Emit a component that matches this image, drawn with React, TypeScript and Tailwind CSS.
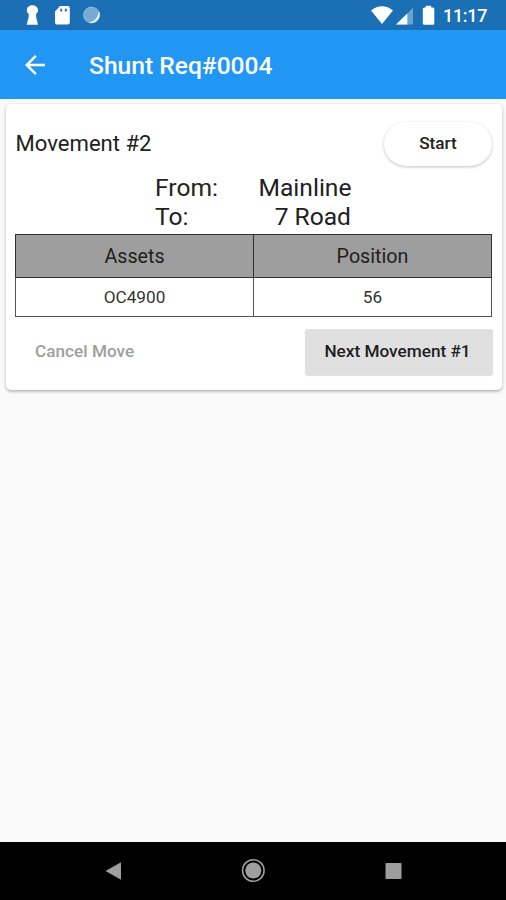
function StatusBar() {
  return (
    <header className="flex h-[30px] items-center justify-between bg-[#1a6fb5] text-white">
      <svg className="h-[30px] w-[120px]" viewBox="0 0 120 30" fill="currentColor">
        <path d="M32.400 5.200c3.400 0 5.600 2.300 5.600 5 0 1.700-.8 2.900-2 3.800l.2 3.500 1.900 7.300H26.700l1.900-7.300.2-3.500c-1.200-.9-2-2.100-2-3.800 0-2.700 2.200-5 5.600-5Z" />
        <path fillRule="evenodd" d="M60 6h7.800a2 2 0 0 1 2 2v14.600a2 2 0 0 1-2 2H57a2 2 0 0 1-2-2V11.500ZM60.300 8.800v2.700h1.900V8.800ZM64.800 8.800v2.700h2V8.800Z" />
        <circle cx="91.500" cy="15" r="8.300" fill="#76a9d3" />
        <circle cx="91.500" cy="15" r="7.900" fill="none" stroke="#9dc3e2" strokeWidth=".8" opacity=".7" />
        <path d="M99 12.200a8 8 0 0 1-9.200 10.300c4.400-.9 7.700-3.700 9.200-10.300Z" fill="#e4f0fa" stroke="#e4f0fa" strokeWidth=".8" strokeLinejoin="round" />
      </svg>
      <div className="flex items-center">
        <svg className="h-[30px] w-[72px]" viewBox="366 0 72 30" fill="currentColor">
          <path d="M371 10.500C377.500 4.800 386.500 4.800 393 10.500L382 24Z" />
          <path d="M413 7.800v16.700H396Z" opacity=".35" />
          <path d="M407.300 13.400v11.100H396Z" />
          <path d="M425.800 5.800h5.400V7.500h1.600a1.500 1.500 0 0 1 1.500 1.500v14.200a1.500 1.500 0 0 1-1.500 1.500h-8.500a1.500 1.500 0 0 1-1.500-1.500V9a1.500 1.500 0 0 1 1.500-1.500h1.500Z" />
        </svg>
        <span className="w-[68px] pl-[5px] pt-[2px] text-[18px] font-medium leading-[28px] tracking-[-0.3px]">11:17</span>
      </div>
    </header>
  );
}

function AppBar() {
  return (
    <div className="flex h-[69px] items-center bg-[#2196f3] pl-[20px] text-white">
      <svg className="h-[30px] w-[30px]" viewBox="0 0 24 24" fill="currentColor">
        <path d="M20 11H7.830l5.590-5.590L12 4l-8 8 8 8 1.410-1.410L7.830 13H20v-2z" />
      </svg>
      <h1 className="ml-[39px] pt-[2px] text-[24.600px] font-medium leading-[30px]">Shunt Req#0004</h1>
    </div>
  );
}

function MovementCard() {
  return (
    <section className="ml-[6px] mt-[5px] h-[286px] w-[496px] rounded-[5px] bg-white px-[9px] pt-[18px] shadow-[0_1px_4px_rgba(0,0,0,0.2),0_2px_2px_rgba(0,0,0,0.12)]">
      <div className="flex h-[44px] items-center justify-between">
        <h2 className="-mt-[2px] ml-[0.500px] text-[22.100px] leading-[28px]">Movement #2</h2>
        <button className="mr-[1px] h-[44px] w-[108px] rounded-full bg-white text-[17.200px] font-medium shadow-[0_1px_3px_rgba(0,0,0,0.25)]">Start</button>
      </div>
      <dl className="ml-[140px] mt-[8px] flex h-[60px] w-[196.500px] justify-between text-[24.600px] leading-[28.500px]">
        <div className="flex flex-col">
          <dt>From:</dt>
          <dt>To:</dt>
        </div>
        <div className="flex flex-col items-end">
          <dd>Mainline</dd>
          <dd className="pr-[0.500px]">7 Road</dd>
        </div>
      </dl>
      <table className="h-[83px] w-[477px] table-fixed border-collapse text-center">
        <thead>
          <tr className="h-[43px] bg-[#9e9e9e] text-[19.700px]">
            <th className="border border-[#303030] p-0 pt-[2px] font-normal">Assets</th>
            <th className="border border-[#303030] p-0 pt-[2px] font-normal">Position</th>
          </tr>
        </thead>
        <tbody>
          <tr className="h-[39px] text-[17.200px] text-[#333]">
            <td className="border border-[#555] p-0 pt-[2px]">OC4900</td>
            <td className="border border-[#555] p-0 pt-[2px]">56</td>
          </tr>
        </tbody>
      </table>
      <div className="mt-[12px] flex h-[46px] items-center justify-between text-[17.200px] font-medium">
        <button className="ml-[20px] text-[#9e9e9e]">Cancel Move</button>
        <button className="h-[46px] w-[188px] rounded-[3px] bg-[#e0e0e0] pr-[3px] text-[#1f1f1f] shadow-[0_1px_1px_rgba(0,0,0,0.12)]">Next Movement #1</button>
      </div>
    </section>
  );
}

function NavigationBar() {
  return (
    <nav className="flex h-[58px] items-center justify-center bg-black text-[#9e9e9e]">
      <svg className="h-[58px] w-[506px]" viewBox="0 842 506 58" fill="currentColor">
        <path d="M105.500 871L121 862.300V879.700Z" />
        <circle cx="253.300" cy="870.500" r="8" />
        <circle cx="253.300" cy="870.500" r="10.800" fill="none" stroke="currentColor" strokeWidth="1.500" />
        <rect x="385.500" y="863" width="16" height="16" rx=".8" />
      </svg>
    </nav>
  );
}

export default function App() {
  return (
    <div className="flex h-[900px] w-[506px] flex-col overflow-hidden bg-[#fafafa] font-['Roboto',sans-serif] text-[#212121]">
      <StatusBar />
      <AppBar />
      <main className="flex-1">
        <MovementCard />
      </main>
      <NavigationBar />
    </div>
  );
}
